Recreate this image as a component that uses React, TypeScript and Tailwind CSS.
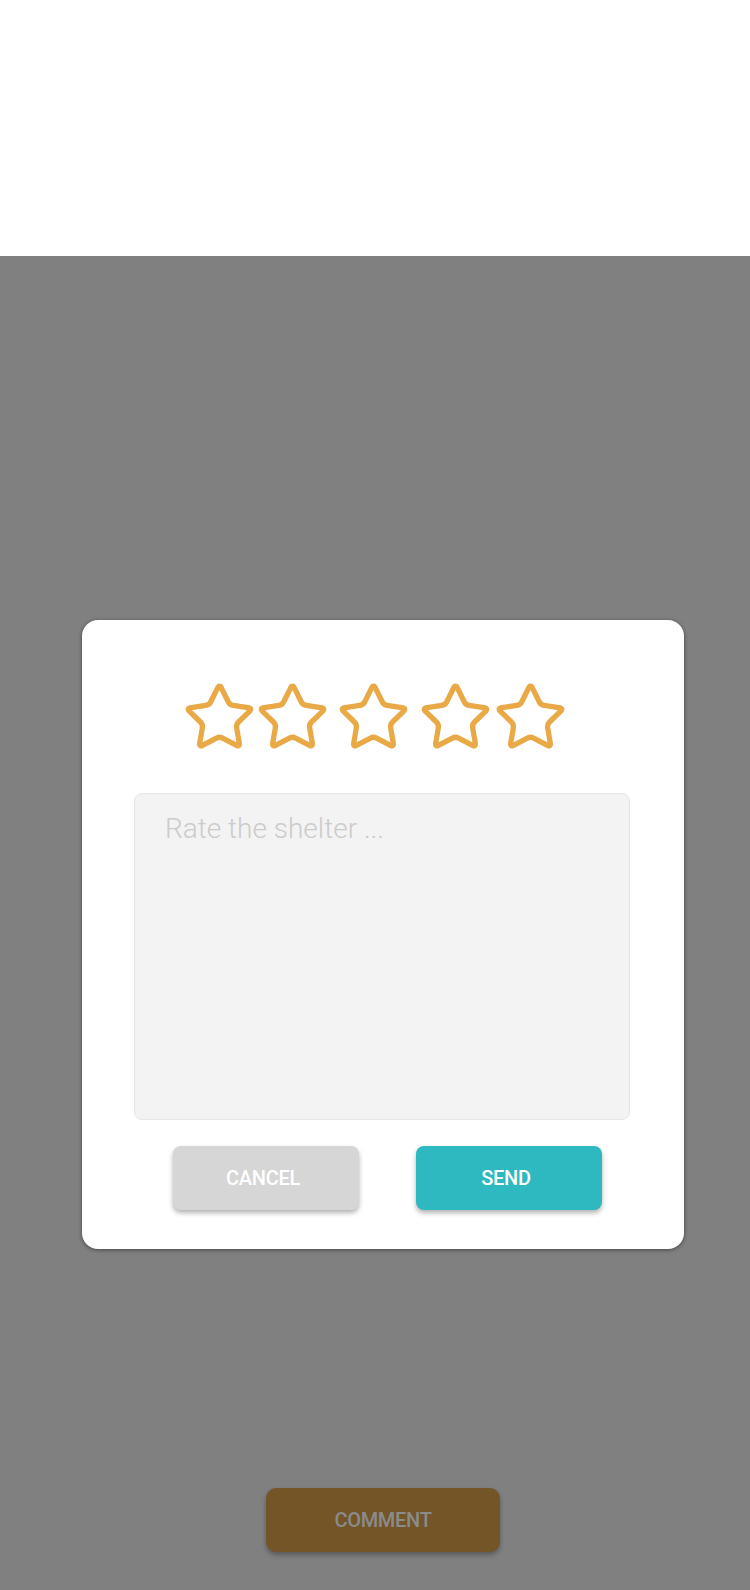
import React from 'react';

const StarOutline = ({ className }: { className?: string }) => (
  <svg
    width="75"
    height="75"
    viewBox="0 0 24 24"
    fill="none"
    stroke="#eaa947"
    strokeWidth="1.7"
    strokeLinecap="round"
    strokeLinejoin="round"
    className={className}
  >
    <path d="M11.525 2.295a.53.53 0 0 1 .95 0l2.31 4.679a2.123 2.123 0 0 0 1.595 1.16l5.166.756a.53.53 0 0 1 .294.904l-3.736 3.638a2.123 2.123 0 0 0-.611 1.878l.882 5.14a.53.53 0 0 1-.771.56l-4.618-2.428a2.122 2.122 0 0 0-1.973 0L6.396 21.01a.53.53 0 0 1-.77-.56l.881-5.139a2.122 2.122 0 0 0-.611-1.879L2.16 9.795a.53.53 0 0 1 .294-.906l5.165-.755a2.122 2.122 0 0 0 1.597-1.16z" />
  </svg>
);

const App: React.FC = () => {
  const starMargins = ['ml-0', '-ml-[2px]', 'ml-[6px]', 'ml-[7px]', 'ml-0'];

  return (
    <div className="w-[750px] h-[1590px] flex flex-col bg-white font-['Roboto',sans-serif]">
      {/* Top area (above the dimmed overlay) */}
      <div className="h-[256px] bg-white shrink-0"></div>

      {/* Dimmed overlay */}
      <div className="flex-1 bg-[#808080] flex flex-col items-center pl-[16px]">
        {/* Rating modal */}
        <div className="mt-[364px] w-[602px] h-[629px] bg-white rounded-[16px] shadow-[0_1px_4px_rgba(0,0,0,0.45)] flex flex-col">
          <div className="flex pt-[60px] pl-[100px]">
            {starMargins.map((m, i) => (
              <StarOutline key={i} className={m} />
            ))}
          </div>

          <textarea
            className="mt-[38px] ml-[52px] w-[496px] h-[327px] resize-none rounded-[8px] border border-[#e6e6e6] bg-[#f3f3f3] pl-[30px] pt-[17px] text-[28px] font-light leading-[1.3] text-[#555] placeholder:text-[#cbcbcb] outline-none"
            placeholder="Rate the shelter ..."
          ></textarea>

          <div className="flex mt-[26px] pl-[91px]">
            <button className="w-[186px] h-[64px] pr-[6px] rounded-[8px] bg-[#d6d6d6] text-white text-[20px] font-medium tracking-[-0.3px] shadow-[0_3px_5px_rgba(0,0,0,0.3)]">
              CANCEL
            </button>
            <button className="ml-[57px] w-[186px] h-[64px] pr-[6px] rounded-[8px] bg-[#2eb8bf] text-white text-[20px] font-medium tracking-[-0.3px] shadow-[0_3px_5px_rgba(0,0,0,0.3)]">
              SEND
            </button>
          </div>
        </div>

        {/* Dimmed comment button behind the overlay */}
        <button className="mt-[239px] w-[234px] h-[64px] rounded-[10px] bg-[#735528] text-[#8b8b8b] text-[20px] font-medium tracking-[-0.3px] shadow-[0_3px_5px_rgba(0,0,0,0.3)]">
          COMMENT
        </button>
      </div>
    </div>
  );
};

export default App;
